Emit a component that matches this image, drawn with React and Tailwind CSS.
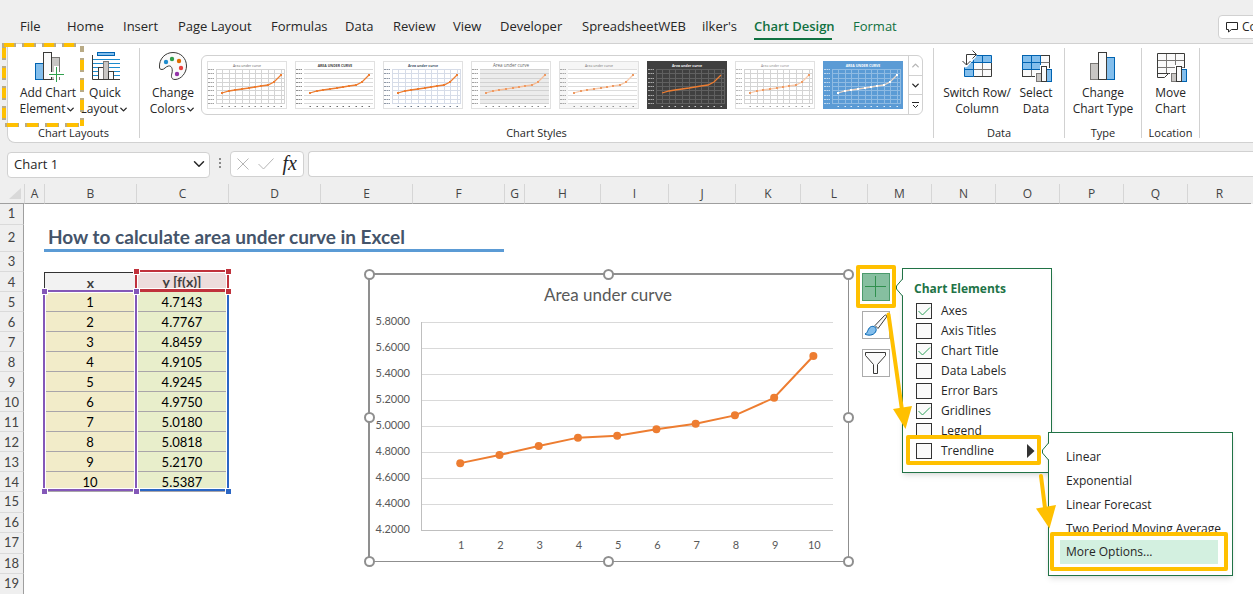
import { useState } from 'react';
import { ChevronDown, ChevronUp } from 'lucide-react';

const UI = "font-['Open_Sans','Noto_Sans',sans-serif]";
const CELL = "font-['Lato','Noto_Sans',sans-serif]";

const TABS = [
  { name: 'File', width: 'w-[26px]' },
  { name: 'Home', width: 'w-[35px]' },
  { name: 'Insert', width: 'w-[34px]' },
  { name: 'Page Layout', width: 'w-[72px]' },
  { name: 'Formulas', width: 'w-[53px]' },
  { name: 'Data', width: 'w-[27px]' },
  { name: 'Review', width: 'w-[39px]' },
  { name: 'View', width: 'w-[26px]' },
  { name: 'Developer', width: 'w-[61px]' },
  { name: 'SpreadsheetWEB', width: 'w-[99px]' },
  { name: "ilker's", width: 'w-[31px]' },
  { name: 'Chart Design', width: 'w-[78px]', active: true },
  { name: 'Format', width: 'w-[41px]', contextual: true },
];

const COLUMNS = [
  ['A', 'w-[20px]'], ['B', 'w-[92px]'], ['C', 'w-[92px]'], ['D', 'w-[92px]'], ['E', 'w-[92px]'],
  ['F', 'w-[92px]'], ['G', 'w-[20px]'], ['H', 'w-[76px]'], ['I', 'w-[68px]'], ['J', 'w-[67px]'],
  ['K', 'w-[65px]'], ['L', 'w-[67px]'], ['M', 'w-[64px]'], ['N', 'w-[64px]'], ['O', 'w-[64px]'],
  ['P', 'w-[64px]'], ['Q', 'w-[64px]'], ['R', 'w-[64px]'],
];

const VALUES = [4.7143, 4.7767, 4.8459, 4.9105, 4.9245, 4.975, 5.018, 5.0818, 5.217, 5.5387];

const ELEMENTS = ['Axes', 'Axis Titles', 'Chart Title', 'Data Labels', 'Error Bars', 'Gridlines', 'Legend', 'Trendline'];

const TRENDLINES = ['Linear', 'Exponential', 'Linear Forecast', 'Two Period Moving Average', 'More Options...'];

const THUMBS = [
  { title: 'Area under curve', bg: '#ffffff', grid: '#d4d4d4', text: '#666666', line: '#ed7d31', vertical: true, dots: true },
  { title: 'AREA UNDER CURVE', bg: '#ffffff', grid: '#dadada', text: '#444444', line: '#ed7d31', bold: true, dots: true },
  { title: 'Area under curve', bg: '#ffffff', grid: '#d6dce8', text: '#44546a', line: '#ed7d31', vertical: true, bold: true, dots: true },
  { title: 'Area under curve', bg: '#ffffff', plot: '#ececec', grid: '#d2d2d2', text: '#666666', line: '#f6bd97', dots: true, big: true },
  { title: 'Area under curve', bg: '#f6f6f6', plot: '#ffffff', grid: '#dddddd', text: '#777777', line: '#f8cbad', dots: true },
  { title: 'Area under curve', bg: '#404040', grid: '#606060', text: '#f2f2f2', line: '#ed7d31', vertical: true, bold: true },
  { title: 'Area under curve', bg: '#ffffff', grid: '#d4d4d4', text: '#888888', line: '#f8cbad', vertical: true, dots: true },
  { title: 'AREA UNDER CURVE', bg: '#5b9bd5', grid: '#8fbbe3', text: '#ffffff', line: '#e6d5c8', dot: '#ffffff', vertical: true, bold: true, dots: true },
];

const THUMB_POINTS = [[15, 32], [22, 30], [28, 29], [35, 28], [42, 27], [48, 26], [54, 25], [61, 24], [67, 21], [74, 14]];

function AddElementIcon() {
  return (
    <svg width="32" height="32" viewBox="0 0 32 32" fill="none">
      <rect x="3.5" y="13.5" width="8" height="16" fill="#83beec" stroke="#0063b1" />
      <rect x="19.5" y="7.5" width="8" height="22" fill="#c8c6c4" stroke="#797775" />
      <rect x="11.5" y="2.5" width="8" height="27" fill="#fafafa" stroke="#3a3a38" />
      <path d="M24.5 16V32M16 24.5H32" stroke="#fff" strokeWidth="5" />
      <path d="M24.5 17V32M17 24.5H32" stroke="#30a14e" />
    </svg>
  );
}

function QuickLayoutIcon() {
  return (
    <svg width="32" height="32" viewBox="0 0 32 32" fill="none">
      <rect x="8.5" y="2.5" width="17" height="3" fill="#83beec" stroke="#0063b1" />
      <path d="M4 9.5H31M4 13.5H31M4 17.5H31M4 21.5H31M4 25.5H31" stroke="#1e8bcd" />
      <rect x="9.5" y="17.5" width="5" height="12" fill="#fafafa" stroke="#3a3a38" />
      <rect x="14.5" y="11.5" width="5" height="18" fill="#c8c6c4" stroke="#797775" />
      <rect x="19.5" y="21.5" width="5" height="8" fill="#fafafa" stroke="#3a3a38" />
      <path d="M3.5 5V29.5H31" stroke="#3a3a38" />
    </svg>
  );
}

function PaletteIcon() {
  return (
    <svg width="32" height="32" viewBox="0 0 32 32" fill="none">
      <path
        d="M2.5 17C2 9 8 2.5 16 2.5C24 2.5 29.5 8.5 29.5 16C29.5 23 24 29.5 18 29.5C14 29.5 14 26 15 23C16 18 14 15.5 11.5 16C8.5 16.5 7.5 19.5 5 19.5C3 19.5 2.5 18.5 2.5 17Z"
        fill="#fafafa" stroke="#3a3a38"
      />
      <circle cx="9" cy="12" r="2.2" fill="#1e8bcd" />
      <circle cx="15" cy="9" r="2.2" fill="#309e4c" />
      <circle cx="22" cy="11" r="2.2" fill="#de6c00" />
      <circle cx="24" cy="18" r="2.2" fill="#e8403f" />
      <circle cx="20" cy="24" r="2.2" fill="#9332a8" />
    </svg>
  );
}

function MiniBars() {
  return (
    <g>
      <path d="M15 31V22H20V15H26V18H32V31Z" fill="#fff" />
      <rect x="16.5" y="23.5" width="5" height="8" fill="#c8c6c4" stroke="#797775" />
      <rect x="26.5" y="19.5" width="5" height="12" fill="#83beec" stroke="#0063b1" />
      <rect x="21.5" y="16.5" width="5" height="15" fill="#fafafa" stroke="#3a3a38" />
    </g>
  );
}

function SwitchIcon() {
  return (
    <svg width="32" height="32" viewBox="0 0 32 32" fill="none">
      <rect x="3.5" y="5.5" width="27" height="21" fill="#fafafa" />
      <path d="M3.5 5.5H30.5V12.5H12.5V26.5H3.5Z" fill="#83beec" />
      <path d="M12.5 19.5H30.5M21.5 12.5V26.5" stroke="#797775" />
      <path d="M12.5 26.5H30.5V12.5" stroke="#3a3a38" />
      <path d="M30.5 12.5V5.5H3.5V26.5H12.5V5.5M3.5 12.5H30.5M3.5 19.5H12.5M21.5 5.5V12.5" stroke="#0063b1" />
      <path d="M0 0H17L15 7L6 17L0 18Z" fill="#fff" />
      <path d="M15 4.5H5.5V15M11.5 .5L15.5 4.5L11.5 8.5M1.5 11L5.5 15L9.5 11" stroke="#3a3a38" />
    </svg>
  );
}

function SelectDataIcon() {
  return (
    <svg width="32" height="32" viewBox="0 0 32 32" fill="none">
      <rect x="2.5" y="5.5" width="27" height="21" fill="#fafafa" stroke="#3a3a38" />
      <path d="M20.5 12.5H29.5M2.5 19.5H29.5M11.5 19.5V26.5M20.5 19.5V26.5" stroke="#797775" />
      <path d="M2.5 5.5H20.5V19.5H2.5ZM11.5 5.5V19.5M2.5 12.5H20.5" fill="#83beec" stroke="#0063b1" />
      <MiniBars />
    </svg>
  );
}

function ChartTypeIcon() {
  return (
    <svg width="32" height="32" viewBox="0 0 32 32" fill="none">
      <rect x="3.5" y="13.5" width="8" height="16" fill="#c8c6c4" stroke="#797775" />
      <rect x="19.5" y="7.5" width="8" height="22" fill="#83beec" stroke="#0063b1" />
      <rect x="11.5" y="2.5" width="8" height="27" fill="#fafafa" stroke="#3a3a38" />
    </svg>
  );
}

function MoveChartIcon() {
  return (
    <svg width="32" height="32" viewBox="0 0 32 32" fill="none">
      <path d="M2.5 3.5H29.5V23.5H13.5L10 27.5H2.5Z" fill="#fafafa" />
      <path d="M2.5 10.5H29.5M2.5 17.5H29.5M11.5 3.5V23.5M20.5 3.5V23.5" stroke="#797775" />
      <path d="M29.5 23.5V3.5H2.5V27.5H9.5L13.5 23.5H17M2.5 23.5H13.5" stroke="#3a3a38" />
      <MiniBars />
    </svg>
  );
}

function Thumb({ style }) {
  const rows = [8, 12, 17, 21, 25, 29, 34, 38, 42];
  const marker = style.dot || '#ed9a63';
  return (
    <svg width="80" height="48" viewBox="0 0 80 48" fill="none">
      <rect x=".5" y=".5" width="79" height="47" fill={style.bg} stroke={style.bg === '#ffffff' || style.bg === '#f6f6f6' ? '#e1e1e1' : style.bg} />
      {style.plot && <rect x="9" y="8" width="69" height="34" fill={style.plot} />}
      {rows.map(y => <path key={y} d={`M9 ${y + 0.5}H78`} stroke={style.grid} />)}
      {rows.map(y => <path key={y} d={`M1 ${y + 0.5}H7`} stroke={style.text} strokeOpacity=".6" strokeDasharray="2 .5" />)}
      {style.vertical && [9, 15, 22, 28, 35, 42, 48, 54, 61, 67, 74, 77].map(x => (
        <path key={x} d={`M${x + 0.5} 8V43`} stroke={style.grid} />
      ))}
      {THUMB_POINTS.map(([x]) => <path key={x} d={`M${x - 0.5} 45.5H${x + 1}`} stroke={style.text} strokeOpacity=".8" />)}
      <text x="40" y="5.5" textAnchor="middle" fontSize={style.big ? 4.5 : 3.5} fontWeight={style.bold ? 700 : 400} fill={style.text}>{style.title}</text>
      <polyline points={THUMB_POINTS.map(p => p.join(',')).join(' ')} stroke={style.line} strokeWidth="1.3" />
      {style.dots && THUMB_POINTS.map(([x, y]) => (
        <rect key={x} x={x - 1} y={y - 1} width="2" height="2" fill={style.line === '#ed7d31' ? '#ed7d31' : marker} />
      ))}
    </svg>
  );
}

function RibbonButton({ icon, lines, menu, width }) {
  return (
    <button className={`flex flex-col items-center gap-[3px] text-xs leading-4 whitespace-nowrap ${width}`}>
      {icon}
      <span className="flex flex-col items-center">
        <span>{lines[0]}</span>
        <span className="flex items-center">
          {lines[1]}
          {menu && <ChevronDown size={11} strokeWidth={3} />}
        </span>
      </span>
    </button>
  );
}

function Group({ label, children, width, pad = '' }) {
  return (
    <>
      <section className={`flex shrink-0 flex-col justify-between pt-1.5 pb-px ${width}`}>
        <div className={`flex items-start ${pad}`}>{children}</div>
        <h2 className="text-center text-[11px] leading-4">{label}</h2>
      </section>
      <div className="my-1 w-px shrink-0 bg-[#d1d1d1]" />
    </>
  );
}

function Ribbon() {
  return (
    <div className="relative ml-[7px] flex h-[100px] rounded-bl-lg border border-r-0 border-[#d1d1d1] bg-white">
      <Group label="Chart Layouts" width="w-[131px]" pad="pl-2">
        <RibbonButton icon={<AddElementIcon />} lines={['Add Chart', 'Element']} menu width="w-16" />
        <RibbonButton icon={<QuickLayoutIcon />} lines={['Quick', 'Layout']} menu width="w-[50px]" />
      </Group>
      <Group label="Chart Styles" width="w-[793px]" pad="pl-[5px]">
        <RibbonButton icon={<PaletteIcon />} lines={['Change', 'Colors']} menu width="w-14" />
        <div className="mt-[5px] flex h-[60px] rounded-md border border-[#d1d1d1]">
          <div className="flex gap-2 p-[5px]">
            {THUMBS.map((style, i) => (
              <button key={i} aria-label={`Style ${i + 1}`} className="h-12 w-20"><Thumb style={style} /></button>
            ))}
          </div>
          <div className="flex w-3.5 flex-col divide-y divide-[#d1d1d1] border-l border-[#d1d1d1]">
            <button aria-label="Previous styles" className="flex flex-1 items-center justify-center text-[#b5b5b5]"><ChevronUp size={11} strokeWidth={3} /></button>
            <button aria-label="Next styles" className="flex flex-1 items-center justify-center"><ChevronDown size={11} strokeWidth={3} /></button>
            <button aria-label="More styles" className="flex flex-1 items-center justify-center">
              <svg width="7" height="8" viewBox="0 0 7 8" fill="none" stroke="#262626"><path d="M0 1.5H7M1 4L3.5 6.5L6 4" /></svg>
            </button>
          </div>
        </div>
      </Group>
      <Group label="Data" width="w-[130px]" pad="pl-1.5">
        <RibbonButton icon={<SwitchIcon />} lines={['Switch Row/', 'Column']} width="w-[74px]" />
        <RibbonButton icon={<SelectDataIcon />} lines={['Select', 'Data']} width="w-11" />
      </Group>
      <Group label="Type" width="w-[76px]">
        <RibbonButton icon={<ChartTypeIcon />} lines={['Change', 'Chart Type']} width="w-[76px]" />
      </Group>
      <Group label="Location" width="w-[57px]">
        <RibbonButton icon={<MoveChartIcon />} lines={['Move', 'Chart']} width="w-[57px]" />
      </Group>
      <svg className="pointer-events-none absolute -top-0.5 -left-1.5" width="84" height="86" viewBox="0 0 84 86" fill="none">
        <g stroke="#b9ab86" strokeWidth="4">
          <path d="M0 3H80" strokeDasharray="14 6" />
          <path d="M2 4V82" strokeDasharray="14 6" />
          <path d="M80 4V84" strokeDasharray="14 6" strokeDashoffset="8" />
          <path d="M0 83H78" strokeDasharray="14 6" strokeDashoffset="-3" />
        </g>
        <g stroke="#ffc000" strokeWidth="4">
          <path d="M2 3H80" strokeDasharray="10 10" />
          <path d="M2 6V82" strokeDasharray="10 10" />
          <path d="M80 18V84" strokeDasharray="10 10" />
          <path d="M5 83H78" strokeDasharray="11 9" />
        </g>
      </svg>
    </div>
  );
}

function FormulaBar() {
  return (
    <div className="flex h-[41px] items-start pt-2 pl-[7px]">
      <div className="relative">
        <select aria-label="Name box" className="h-[26px] w-[203px] appearance-none rounded border border-[#d1d1d1] bg-white pl-1.5 text-[13px]">
          <option>Chart 1</option>
        </select>
        <ChevronDown size={18} strokeWidth={2} className="pointer-events-none absolute top-1 right-0.5" />
      </div>
      <svg className="mx-2 mt-[7px]" width="4" height="12" fill="#8a8a8a"><rect x="1" width="2" height="2" /><rect x="1" y="4" width="2" height="2" /><rect x="1" y="8" width="2" height="2" /></svg>
      <div className="flex h-[26px] w-[74px] items-center justify-between rounded border border-[#d1d1d1] bg-white px-1.5">
        <button aria-label="Cancel"><svg width="12" height="12" viewBox="0 0 12 12" fill="none" stroke="#b5b5b5"><path d="M.5 .5L11.5 11.5M11.5 .5L.5 11.5" /></svg></button>
        <button aria-label="Enter"><svg width="16" height="12" viewBox="0 0 16 12" fill="none" stroke="#b5b5b5"><path d="M.5 6L5.5 11L15.5 .5" /></svg></button>
        <button className="pb-0.5 font-['Liberation_Serif',serif] text-xl leading-5 italic">fx</button>
      </div>
      <input aria-label="Formula" className="ml-1 h-[26px] min-w-0 flex-1 rounded-l border border-r-0 border-[#d1d1d1] bg-white px-2" />
    </div>
  );
}

function RowHead({ n }) {
  return (
    <th scope="row" className="border-r border-b border-r-[#9f9f9f] border-b-[#dadada] bg-[#efefef] p-0 text-center text-[13px] font-normal text-[#444]">{n}</th>
  );
}

function Sheet() {
  return (
    <table className={`w-[1251px] table-fixed border-separate border-spacing-0 ${CELL}`}>
      <colgroup>
        <col className="w-6" />
        {COLUMNS.map(([name, width]) => <col key={name} className={width} />)}
      </colgroup>
      <thead>
        <tr className={`h-5 bg-[#efefef] text-xs leading-4 text-[#444] ${UI}`}>
          <th className="w-6 border-b border-[#9f9f9f] p-0">
            <svg className="ml-2" width="14" height="14" fill="#d9d9d9"><path d="M13 1V12H1Z" /></svg>
          </th>
          {COLUMNS.map(([name]) => (
            <th key={name} className="border-b border-l border-b-[#9f9f9f] border-l-[#d6d6d6] p-0 font-normal">{name}</th>
          ))}
        </tr>
      </thead>
      <tbody>
        <tr className="h-5"><RowHead n={1} /><td colSpan={18} /></tr>
        <tr className="h-[27px]">
          <RowHead n={2} />
          <td />
          <td colSpan={5} className="border-b-[3px] border-[#5b9bd5] p-0 pl-1 text-[19px] leading-6 font-bold whitespace-nowrap text-[#44546a]">
            How to calculate area under curve in Excel
          </td>
          <td colSpan={12} />
        </tr>
        <tr className="h-5"><RowHead n={3} /><td colSpan={18} /></tr>
        <tr className="h-5 text-sm leading-4 font-bold text-[#3f3f3f]">
          <RowHead n={4} />
          <td />
          <td className="border-t border-l border-[#333] bg-[#f2f2f2] p-0 text-center">x</td>
          <td className="bg-[#eddcdc] p-0 text-center">y [f(x)]</td>
          <td colSpan={15} />
        </tr>
        {VALUES.map((v, i) => (
          <tr key={i} className="h-5 text-[13px] leading-4 text-black">
            <RowHead n={i + 5} />
            <td />
            <td className="border-b border-[#a9a5a9] bg-[#f2ecc9] p-0 text-center">{i + 1}</td>
            <td className="border-b border-[#a9a5a9] bg-[#e8eecb] p-0 text-center">{v.toFixed(4)}</td>
            <td colSpan={15} />
          </tr>
        ))}
        {[15, 16, 17, 18, 19].map(n => (
          <tr key={n} className="h-5"><RowHead n={n} /><td colSpan={18} /></tr>
        ))}
        <tr className="h-5"><RowHead n="" /><td colSpan={18} /></tr>
      </tbody>
    </table>
  );
}

// coloured frames around the ranges the chart reads from
function RangeFrames() {
  const handles = [
    [93, 1, '#c0323c'], [185, 1, '#c0323c'], [185, 21, '#c0323c'],
    [1, 21, '#8458b8'], [93, 21, '#8458b8'], [1, 221, '#8458b8'], [93, 221, '#8458b8'],
    [185, 221, '#2b66c4'],
  ];
  return (
    <svg className="pointer-events-none absolute top-[85px] left-[42px]" width="190" height="228" fill="none">
      <path d="M95.5 24V219.5H184.5V24" stroke="#fff" />
      <path d="M94 221H186V22" stroke="#2b66c4" strokeWidth="2" />
      <rect x="95.5" y="3.5" width="89" height="16" stroke="#fff" />
      <rect x="94" y="2" width="92" height="19" stroke="#c0323c" strokeWidth="2" />
      <rect x="3.5" y="23.5" width="89" height="196" stroke="#fff" />
      <rect x="2" y="22" width="92" height="199" stroke="#8458b8" strokeWidth="2" />
      <path d="M95 22H186" stroke="#c0323c" strokeWidth="2" />
      {handles.map(([x, y, fill]) => (
        <rect key={`${x}-${y}`} x={x - 1.5} y={y - 1.5} width="6" height="6" fill={fill} stroke="#fff" />
      ))}
    </svg>
  );
}

function AreaChart() {
  const x = i => 57 + ((i + 1) * 412) / 10.5;
  const y = v => 261 - ((v - 4.2) / 0.2) * 26;
  const ticks = [5.8, 5.6, 5.4, 5.2, 5, 4.8, 4.6, 4.4, 4.2];
  const handles = [[5, 5], [244, 5], [484, 5], [5, 148], [484, 148], [5, 292], [244, 292], [484, 292]];
  return (
    <svg className={`absolute top-[85px] left-[364px] ${CELL}`} width="490" height="298" fill="none">
      <rect x="5.5" y="5.5" width="479" height="287" fill="#fff" stroke="#8f8f8f" />
      <path d="M4.5 292V4.5H484" stroke="#8f8f8f" />
      <text x="244" y="32" textAnchor="middle" fontSize="17" fill="#595959">Area under curve</text>
      {ticks.map(t => (
        <g key={t}>
          <path d={`M57 ${Math.round(y(t)) + 0.5}H469`} stroke={t === 4.2 ? '#bfbfbf' : '#d9d9d9'} />
          <text x="46" y={Math.round(y(t)) + 3} textAnchor="end" fontSize="11" fill="#595959">{t.toFixed(4)}</text>
        </g>
      ))}
      <path d="M57.5 53V262" stroke="#bfbfbf" />
      {VALUES.map((v, i) => (
        <text key={i} x={x(i) + 1} y="280" textAnchor="middle" fontSize="11" fill="#595959">{i + 1}</text>
      ))}
      <polyline points={VALUES.map((v, i) => `${x(i)},${y(v)}`).join(' ')} stroke="#ed7d31" strokeWidth="2" />
      {VALUES.map((v, i) => <circle key={i} cx={x(i)} cy={y(v)} r="4" fill="#ed7d31" />)}
      {handles.map(([cx, cy]) => (
        <circle key={`${cx}-${cy}`} cx={cx + 0.5} cy={cy + 0.5} r="4.5" fill="#fff" stroke="#8f8f8f" strokeWidth="2" />
      ))}
    </svg>
  );
}

function ChartTools() {
  return (
    <div className="absolute top-[81px] left-[856px] flex w-10 flex-col items-center">
      <div className="rounded-xs border-4 border-[#ffc000] bg-white px-0.5 pt-1 pb-[3px]">
        <button aria-label="Chart Elements" className="flex size-7 items-center justify-center border border-[#4b9a6c] bg-[#86bfa0]">
          <svg width="22" height="22" fill="none" stroke="#30904e"><path d="M10.5 0V21M0 10.5H21" /></svg>
        </button>
      </div>
      <button aria-label="Chart Styles" className="mt-[3px] flex size-7 items-center justify-center border border-[#ababab] bg-white">
        <svg width="26" height="26" viewBox="0 0 26 26" fill="none">
          <path d="M12 13.5L21.5 3.5C23 2.3 24.5 3.5 23.5 5L15 16.5Z" fill="#fafafa" stroke="#3a3a38" />
          <path d="M2 22C5 21.5 4.5 15.5 8.5 14.5C12 13.5 14.5 17 12.5 20C10.5 23.5 5 24 2 22Z" fill="#83beec" stroke="#0063b1" />
        </svg>
      </button>
      <button aria-label="Chart Filters" className="mt-2.5 flex size-7 items-center justify-center border border-[#ababab] bg-white">
        <svg width="26" height="26" viewBox="0 0 26 26" fill="none">
          <path d="M2.5 2.5H22.5V5.5L14.5 14.5V23.5H10.5V14.5L2.5 5.5Z" fill="#fafafa" stroke="#3a3a38" />
        </svg>
      </button>
    </div>
  );
}

function Notch() {
  return (
    <svg className="absolute top-[9px] -left-2" width="9" height="20" fill="#fff">
      <path d="M9 1H8L1 8V11L8 18H9Z" />
      <path d="M7.5 1L1.5 8V11L7.5 18" fill="none" stroke="#217346" />
    </svg>
  );
}

function ElementItem({ name, checked, onChange }) {
  return (
    <label className="flex h-5 items-center gap-[9px] text-xs">
      <span className="relative size-4">
        <input type="checkbox" checked={checked} onChange={onChange} className="block size-4 appearance-none border border-[#333] bg-[#fafafa]" />
        {checked && (
          <svg className="pointer-events-none absolute inset-0" width="16" height="16" fill="none" stroke="#30a15c"><path d="M2.5 8L6.5 12L14 4.5" /></svg>
        )}
      </span>
      {name}
    </label>
  );
}

function ElementsPanel() {
  const [checked, setChecked] = useState(['Axes', 'Chart Title', 'Gridlines']);

  function toggle(name) {
    setChecked(list => (list.includes(name) ? list.filter(n => n !== name) : [...list, name]));
  }

  return (
    <div className="absolute top-[84px] left-[902px] h-[205px] w-[150px] border border-[#217346] bg-white shadow-md">
      <Notch />
      <h3 className="mt-2.5 mb-0.5 ml-[11px] text-xs leading-5 font-bold text-[#217346]">Chart Elements</h3>
      <div className="ml-[13px]">
        {ELEMENTS.slice(0, 7).map(name => (
          <ElementItem key={name} name={name} checked={checked.includes(name)} onChange={() => toggle(name)} />
        ))}
      </div>
      <div className="absolute top-[166px] left-[3px] flex h-[30px] w-[135px] items-end justify-between rounded-xs border-4 border-[#ffc000] bg-white pr-0.5 pl-1.5">
        <ElementItem name="Trendline" checked={checked.includes('Trendline')} onChange={() => toggle('Trendline')} />
        <svg className="mb-0.5" width="9" height="16" fill="#333"><path d="M1 1L8.5 8L1 15Z" /></svg>
      </div>
    </div>
  );
}

function TrendlineMenu() {
  return (
    <div className="absolute top-[248px] left-[1048px] h-[144px] w-[185px] border border-[#217346] bg-white shadow-md">
      <Notch />
      <div className="flex flex-col pt-3">
        {TRENDLINES.slice(0, 4).map(name => (
          <button key={name} className="h-6 pl-[17px] text-left text-xs whitespace-nowrap">{name}</button>
        ))}
      </div>
      <div className="absolute top-[99px] left-px flex h-[39px] w-[178px] items-end rounded-xs border-4 border-[#ffc000] bg-white px-1.5 pb-[3px]">
        <button className="h-6 w-full bg-[#d3f0e0] pl-1.5 text-left text-xs">{TRENDLINES[4]}</button>
      </div>
    </div>
  );
}

function Arrows() {
  return (
    <svg className="pointer-events-none absolute top-[124px] left-[880px]" width="180" height="226" fill="#ffc000" stroke="#ffc000">
      <path d="M8.5 6.5L22 102" strokeWidth="4" strokeLinecap="round" />
      <path d="M13 101L32 98L25.5 121Z" stroke="none" />
      <path d="M161 168L165 200" strokeWidth="4" strokeLinecap="round" />
      <path d="M156 200.5L176 197L169.500 220.5Z" stroke="none" />
    </svg>
  );
}

export default function App() {
  return (
    <div className={`flex h-screen flex-col overflow-hidden bg-[#efefef] text-[#262626] ${UI}`}>
      <header className="flex h-[43px] shrink-0 items-start justify-between overflow-hidden">
        <nav className="flex shrink-0 gap-[21px] pt-4 pl-5">
          {TABS.map(tab => (
            <button
              key={tab.name}
              className={`h-6 border-b-2 pb-0.5 text-left text-[13px] leading-5 whitespace-nowrap ${tab.width} ${tab.active ? 'border-[#107141] font-semibold text-[#107141]' : 'border-transparent'} ${tab.contextual ? 'text-[#107141]' : ''}`}
            >
              {tab.name}
            </button>
          ))}
        </nav>
        <div className="mt-[15px] flex w-[35px] overflow-hidden">
          <button className="flex h-6 shrink-0 items-center gap-1 rounded border border-[#d1d1d1] bg-white px-[7px] text-xs">
            <svg width="12" height="12" viewBox="0 0 12 12" fill="none" stroke="#262626"><path d="M.5 1.5H11.5V8.5H5.5L2.5 11V8.5H.5Z" /></svg>
            Comments
          </button>
        </div>
      </header>
      <div className="shrink-0">
        <Ribbon />
        <FormulaBar />
      </div>
      <main className="relative min-h-0 flex-1 overflow-hidden bg-white">
        <div className="h-5 bg-[#efefef]">
          <Sheet />
        </div>
        <RangeFrames />
        <AreaChart />
        <ChartTools />
        <ElementsPanel />
        <TrendlineMenu />
        <Arrows />
      </main>
    </div>
  );
}
